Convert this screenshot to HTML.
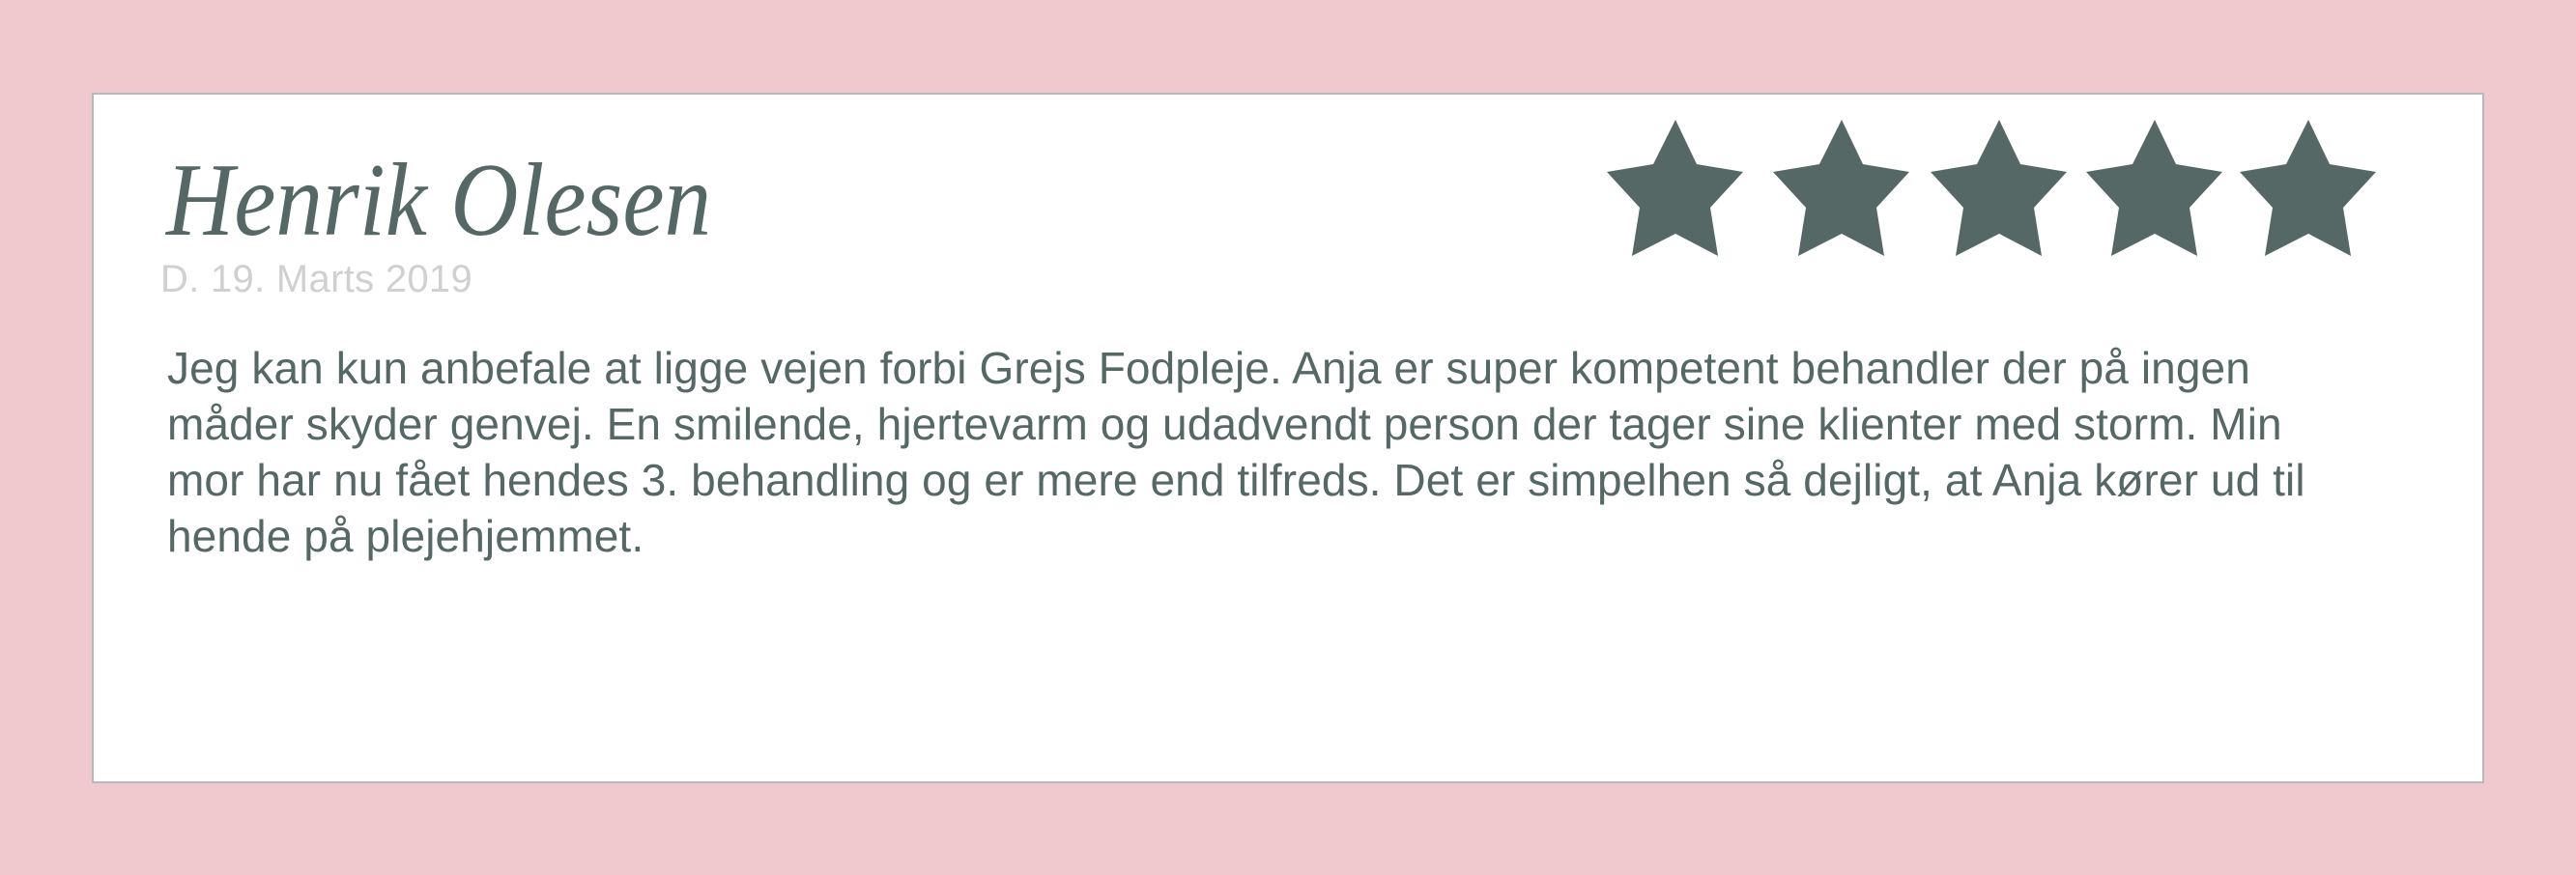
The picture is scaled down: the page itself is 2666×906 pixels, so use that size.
<!DOCTYPE html>
<html><head><meta charset="utf-8"><style>
html,body{margin:0;padding:0}
body{width:2666px;height:906px;background:#efc9ce;position:relative;overflow:hidden;font-family:"Liberation Sans",sans-serif}
.box{position:absolute;left:95px;top:96px;width:2472px;height:711px;background:#fff;border:2px solid #b9b9b9}
.name{position:absolute;left:172px;top:146px;font-family:"Liberation Serif",serif;font-style:italic;font-size:108px;color:#566866;white-space:nowrap;transform-origin:0 0;transform:scaleX(0.9)}
.date{position:absolute;left:166px;top:267px;font-size:40px;color:#d0d0d0;white-space:nowrap;letter-spacing:0.3px}
.body{position:absolute;left:173px;top:352px;font-size:46px;line-height:58px;color:#566866;white-space:nowrap;letter-spacing:0.1px}
svg{position:absolute;left:0;top:0}
</style></head><body>
<div class="box"></div>
<div class="name">Henrik Olesen</div>
<div class="date">D. 19. Marts 2019</div>
<div class="body">Jeg kan kun anbefale at ligge vejen forbi Grejs Fodpleje. Anja er super kompetent behandler der på ingen<br>måder skyder genvej. En smilende, hjertevarm og udadvendt person der tager sine klienter med storm. Min<br>mor har nu fået hendes 3. behandling og er mere end tilfreds. Det er simpelhen så dejligt, at Anja kører ud til<br>hende på plejehjemmet.</div>
<svg width="2666" height="906">
<defs><path id="s" d="M0,0 L22,46 L70,54 L36,91 L44,141 L0,118 L-45,141 L-37,91 L-71,54 L-23,46 Z" fill="#566866"/></defs>
<use href="#s" x="1734" y="124"/>
<use href="#s" x="1906" y="124"/>
<use href="#s" x="2069" y="124"/>
<use href="#s" x="2230" y="124"/>
<use href="#s" x="2389" y="124"/>
</svg>
</body></html>
